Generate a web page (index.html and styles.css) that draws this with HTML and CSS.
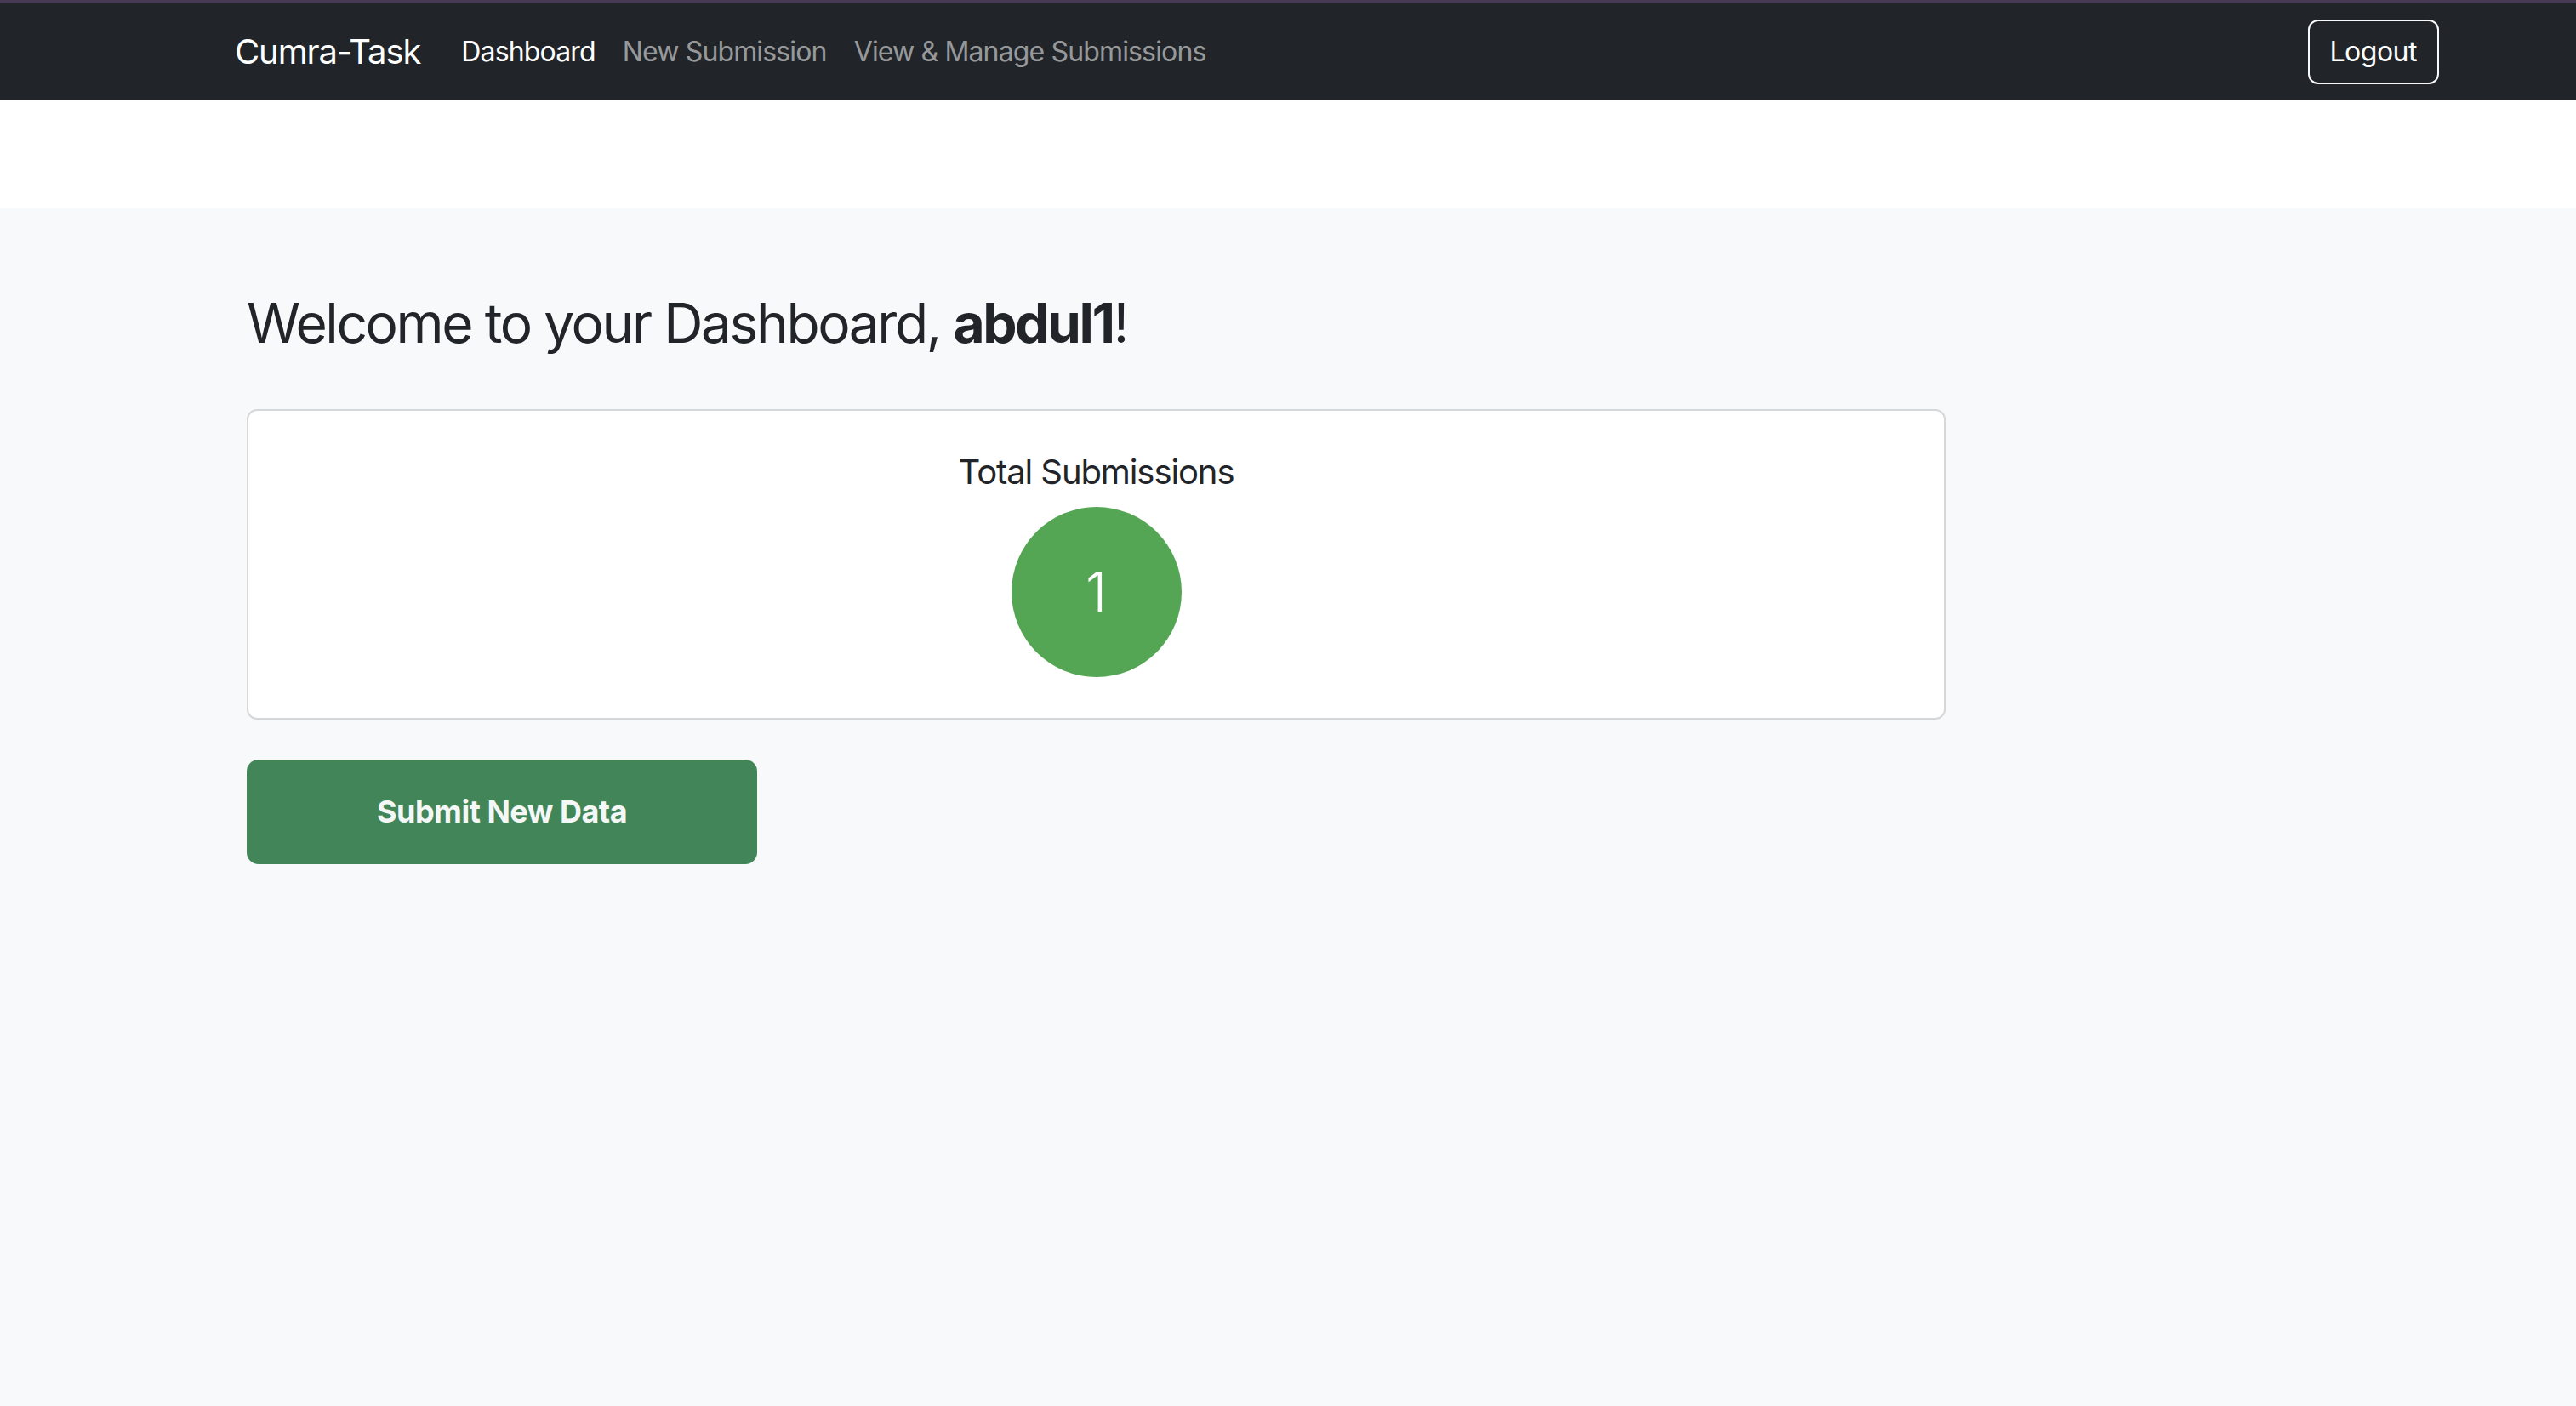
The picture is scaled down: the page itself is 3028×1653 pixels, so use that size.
FILE: index.html
```html
<!DOCTYPE html>
<html lang="en">
<head>
<meta charset="utf-8">
<title>Cumra-Task Dashboard</title>
<link rel="stylesheet" href="styles.css">
</head>
<body>
<nav class="navbar">
  <div class="nav-left">
    <a class="brand" href="#">Cumra-Task</a>
    <ul class="nav-links">
      <li><a class="nav-link active" href="#">Dashboard</a></li>
      <li><a class="nav-link" href="#">New Submission</a></li>
      <li><a class="nav-link" href="#">View &amp; Manage Submissions</a></li>
    </ul>
  </div>
  <a class="btn-logout" href="#">Logout</a>
</nav>
<div class="spacer"></div>
<main class="main">
  <h2 class="welcome">Welcome to your Dashboard, <strong>abdul1</strong>!</h2>
  <section class="card">
    <h5 class="card-title">Total Submissions</h5>
    <div class="count-circle">1</div>
  </section>
  <a class="btn-submit" href="#">Submit New Data</a>
</main>
</body>
</html>
```
FILE: styles.css
```css
* { box-sizing: border-box; }
html, body { margin: 0; padding: 0; }
body {
  font-family: Inter, "Noto Sans", "Liberation Sans", sans-serif;
  color: #212529;
  background: #ffffff;
}
a { text-decoration: none; }

.navbar {
  display: flex;
  align-items: center;
  justify-content: space-between;
  background: #212529;
  border-top: 4px solid #473a54;
  height: 117px;
  padding: 0 161px 0 276px;
}
.nav-left {
  display: flex;
  align-items: center;
}
.brand {
  color: #ffffff;
  font-size: 40px;
  line-height: 60px;
  margin-right: 32px;
  letter-spacing: -1.1px;
}
.nav-links {
  display: flex;
  list-style: none;
  margin: 0;
  padding: 0;
}
.nav-link {
  display: block;
  padding: 16px 16px;
  font-size: 32px;
  line-height: 48px;
  color: rgba(255, 255, 255, 0.55);
  letter-spacing: -0.85px;
}
.nav-link.active { color: #ffffff; }

.btn-logout {
  display: inline-block;
  color: #ffffff;
  border: 2px solid #f8f9fa;
  border-radius: 12px;
  padding: 12px 24px;
  font-size: 32px;
  line-height: 48px;
  letter-spacing: -0.5px;
}

.spacer { height: 128px; background: #ffffff; }

.main {
  background: #f8f9fa;
  min-height: 1408px;
  padding: 97px 0 0 290px;
}
.welcome {
  margin: 0 0 62px 0;
  font-size: 64px;
  line-height: 1.2;
  font-weight: 400;
  letter-spacing: -2.4px;
}
.welcome strong { font-weight: 700; }

.card {
  width: 1997px;
  background: #ffffff;
  border: 2px solid #d6d7d8;
  border-radius: 12px;
  padding: 48px 32px;
  display: flex;
  flex-direction: column;
  align-items: center;
}
.card-title {
  margin: 0 0 17px 0;
  font-size: 40px;
  line-height: 48px;
  font-weight: 400;
  letter-spacing: -1.1px;
}
.count-circle {
  width: 200px;
  height: 200px;
  border-radius: 50%;
  background: #54a654;
  color: #ffffff;
  display: flex;
  align-items: center;
  justify-content: center;
  font-size: 64px;
  font-weight: 300;
}

.btn-submit {
  margin-top: 47px;
  width: 600px;
  height: 123px;
  display: flex;
  align-items: center;
  justify-content: center;
  background: #428559;
  color: #f4f7f5;
  border-radius: 14px;
  font-size: 36px;
  font-weight: 700;
  letter-spacing: -0.5px;
}
```
